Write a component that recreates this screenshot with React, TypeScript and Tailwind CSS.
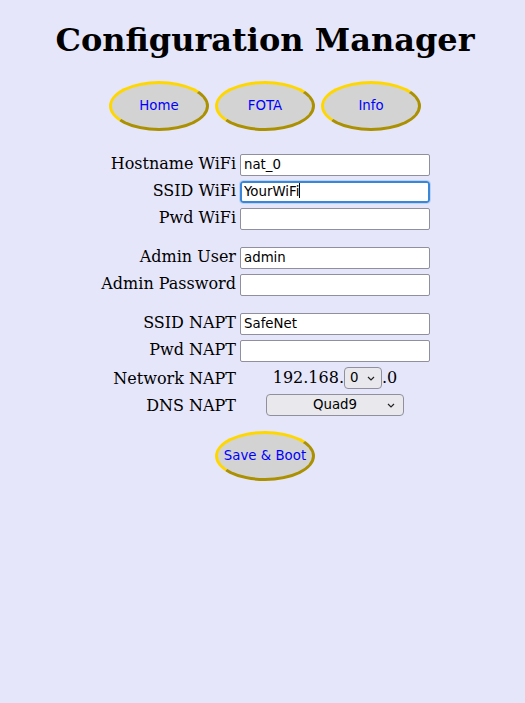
import React from "react";

const navItems = ["Home", "FOTA", "Info"];

const OvalButton: React.FC<{ label: string }> = ({ label }) => (
  <button
    type="button"
    className="w-[100px] h-[50px] rounded-[50%] border-[3px] border-[#ffd700] [border-style:outset] bg-[#d3d3d3] text-[#0000ff] font-['DejaVu_Sans'] text-[13.33px] px-0"
  >
    {label}
  </button>
);

const Chevron: React.FC = () => (
  <svg width="8" height="5" viewBox="0 0 8 5" className="shrink-0">
    <path d="M1 1 L4 4 L7 1" fill="none" stroke="#222" strokeWidth="1.2" />
  </svg>
);

const TextField: React.FC<{ value?: string; focused?: boolean }> = ({
  value = "",
  focused,
}) => (
  <div className="relative h-[22px] w-[190px]">
    <input
      type="text"
      defaultValue={value}
      className={
        focused
          ? "h-full w-full rounded-[3px] border-2 border-[#3c86d8] bg-white px-[2px] font-['DejaVu_Sans'] text-[13.33px] text-black outline outline-[1px] outline-[#b9d3f1]"
          : "h-full w-full rounded-[2px] border border-[#8f8f9d] bg-white px-[3px] font-['DejaVu_Sans'] text-[13.33px] text-black outline-none"
      }
    />
    {focused && (
      <span className="absolute left-[59px] top-[4px] h-[15px] w-px bg-black" />
    )}
  </div>
);

type Row = { label: string; value?: string; focused?: boolean };

const groups: Row[][] = [
  [
    { label: "Hostname WiFi", value: "nat_0" },
    { label: "SSID WiFi", value: "YourWiFi", focused: true },
    { label: "Pwd WiFi" },
  ],
  [{ label: "Admin User", value: "admin" }, { label: "Admin Password" }],
];

const Label: React.FC<{ text: string; className?: string }> = ({ text, className = "" }) => (
  <span className={`text-right text-[16px] leading-[19px] text-black ${className}`}>{text}</span>
);

export default function App() {
  return (
    <div className="min-h-screen bg-[#e6e6fa] pl-[5px] font-['DejaVu_Serif'] text-black">
      <h1 className="pt-[22px] text-center text-[32px] font-bold leading-[37px]">
        Configuration Manager
      </h1>

      <nav className="mt-[22px] flex justify-center gap-[6px]">
        {navItems.map((n) => (
          <OvalButton key={n} label={n} />
        ))}
      </nav>

      <form className="mt-[21px] flex flex-col items-center gap-[17px]">
        {groups.map((g, i) => (
          <div
            key={i}
            className="grid grid-cols-[136px_190px] items-center gap-x-[4px] gap-y-[5px]"
          >
            {g.map((r) => (
              <React.Fragment key={r.label}>
                <Label text={r.label} />
                <TextField value={r.value} focused={r.focused} />
              </React.Fragment>
            ))}
          </div>
        ))}

        <div className="grid grid-cols-[136px_190px] items-center gap-x-[4px] gap-y-[5px]">
          <Label text="SSID NAPT" />
          <TextField value="SafeNet" />
          <Label text="Pwd NAPT" />
          <TextField />

          <Label text="Network NAPT" className="mt-[2px]" />
          <div className="mt-[2px] flex h-[22px] items-center justify-center text-[16px]">
            <span>192.168.</span>
            <div className="flex h-[22px] w-[38px] items-center justify-between rounded-[4px] border border-[#8f8f9d] bg-[#e9e9ed] pl-[5px] pr-[6px] font-['DejaVu_Sans'] text-[13.33px]">
              <span>0</span>
              <Chevron />
            </div>
            <span>.0</span>
          </div>

          <Label text="DNS NAPT" />
          <div className="flex justify-center">
            <div className="relative flex h-[22px] w-[138px] items-center justify-center rounded-[4px] border border-[#8f8f9d] bg-[#e9e9ed] font-['DejaVu_Sans'] text-[13.33px]">
              <span>Quad9</span>
              <span className="absolute right-[8px] top-[8px]">
                <Chevron />
              </span>
            </div>
          </div>
        </div>

        <div className="-mt-[2px]">
          <OvalButton label="Save & Boot" />
        </div>
      </form>
    </div>
  );
}
